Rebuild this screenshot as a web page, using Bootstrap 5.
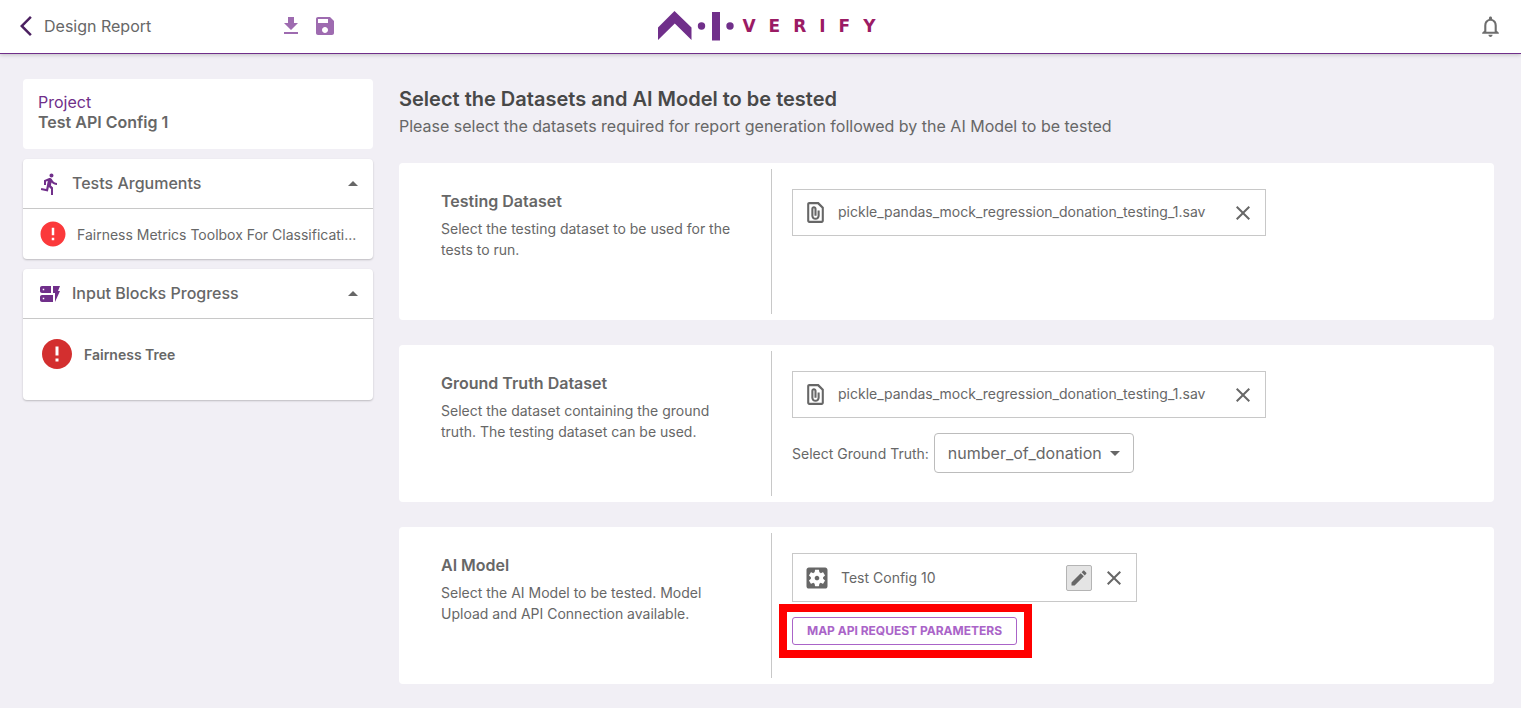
<!DOCTYPE html>
<html lang="en">
<head>
<meta charset="utf-8">
<meta name="viewport" content="width=device-width, initial-scale=1">
<title>AI Verify - Design Report</title>
<link href="https://cdn.jsdelivr.net/npm/bootstrap@5.3.0/dist/css/bootstrap.min.css" rel="stylesheet">
<style>
  :root { --brand: #702f8a; --ink: #676767; --line: #c8c8c8; }
  body { background: #f1eff5; color: var(--ink); font-family: Inter, sans-serif; font-size: 14px; line-height: 21px; }
  svg { display: block; fill: currentColor; flex: none; }
  h1, h2, h3, p { margin: 0; }

  .topbar { display: grid; grid-template-columns: 1fr auto 1fr; height: 54px; padding: 0 0 1px 14px; background: #fff; border-bottom: 1px solid var(--brand); box-shadow: 0 1px 4px rgba(0,0,0,.2); }
  .crumb { width: 235px; margin-left: 6px; font-size: 16px; }
  .tool { padding: 0; border: 0; background: none; color: inherit; }
  .back { color: #4b2060; }
  .tools { gap: 10px; color: #9e6bb0; }
  .brand-logo { margin-left: 12px; color: var(--brand); text-decoration: none; gap: 8px; }
  .wordmark { color: #9b1b64; font: bold 17px/24px "DejaVu Sans", sans-serif; letter-spacing: 13px; }
  .bell { margin-right: 18px; color: #6e6e6e; }

  .page { gap: 26px; padding: 25px 27px 24px 23px; }
  .side { width: 350px; gap: 10px; }
  .panel { background: #fff; border-radius: 4px; }
  .raised { box-shadow: 0 1px 2px rgba(0,0,0,.22); }
  .project { padding: 13px 15px 17px; font-size: 16px; line-height: 20px; }
  .project h2 { font-size: 16px; line-height: 20px; font-weight: 600; }
  .project p { color: var(--brand); }
  .panel-head { width: 100%; height: 50px; padding: 0 8px 0 15px; gap: 10px; border: 0; border-bottom: 1px solid var(--line); background: none; color: inherit; font-size: 16px; font-weight: 500; text-align: left; }
  .panel-head .lead-icon { color: var(--brand); }
  .test-row { height: 50px; padding: 0 15px; gap: 9px; }
  .error-soft { color: #fb393b; }
  .error-strong { color: #d32f2f; }
  .block-row { min-height: 81px; padding: 17px 16px 28px; gap: 9px; font-weight: 600; }

  .page-title { font-size: 20px; line-height: 28px; font-weight: 600; color: #484848; padding-top: 6px; }
  .page-sub { font-size: 16px; line-height: 24px; margin: 1px 0 25px; }
  .stack { gap: 25px; }
  .choice { min-height: 157px; padding: 6px 0; }
  .choice-text { width: 373px; padding: 20px 32px 0 42px; border-right: 1px solid var(--line); }
  .choice-text h3 { font-size: 16px; line-height: 24px; font-weight: 600; margin-bottom: 5px; }
  .choice-body { padding: 20px; }
  .file-box { max-width: 474px; height: 47px; padding: 0 10px; gap: 10px; border: 1px solid var(--line); }
  .file-name { padding-bottom: 3px; }
  .model-box { max-width: 345px; height: 49px; }
  .edit-btn { width: 26px; height: 26px; border: 1px solid #b4b4b4; border-radius: 2px; background: #e4e4e4; }
  .truth { margin-top: 15px; gap: 5px; }
  .truth-select { width: 200px; height: 40px; padding: 0 28px 0 13px; border: 1px solid #bcbcbc; border-radius: 4px; color: inherit; font-size: 16px; line-height: 24px;
    background: #fff url("data:image/svg+xml,%3Csvg xmlns='http://www.w3.org/2000/svg' viewBox='0 0 24 24'%3E%3Cpath fill='%23676767' d='M7 10l5 5 5-5z'/%3E%3C/svg%3E") no-repeat right 6px center / 24px; }
  .callout { width: 253px; margin: 2px 0 0 -13px; padding: 5px 7px 5px 5px; border: 8px solid #f00; }
  .map-btn { width: 100%; height: 28px; padding: 0; border: 1px solid #aa64c8; border-radius: 3px; background: #fff; color: #aa64c8; font-size: 12px; line-height: 18px; font-weight: 700; }
</style>
</head>
<body>
<svg class="d-none" aria-hidden="true">
  <symbol id="i-error" viewBox="0 0 24 24"><path d="M12 2C6.48 2 2 6.48 2 12s4.48 10 10 10 10-4.48 10-10S17.52 2 12 2zm1 15h-2v-2h2v2zm0-4h-2V7h2v6z"/></symbol>
  <symbol id="i-up" viewBox="0 0 24 24"><path d="M7 14l5-5 5 5z"/></symbol>
  <symbol id="i-close" viewBox="0 0 24 24"><path d="M19 6.41 17.59 5 12 10.59 6.41 5 5 6.41 10.59 12 5 17.59 6.41 19 12 13.41 17.59 19 19 17.59 13.41 12z"/></symbol>
  <symbol id="i-file" viewBox="0 0 24 24"><path d="M15 2H6c-1.1 0-2 .9-2 2v16c0 1.1.89 2 1.99 2H18c1.1 0 2-.9 2-2V7l-5-5zM6 20V4h8l4 4v12H6zm10-10v5c0 2.210-1.790 4-4 4s-4-1.790-4-4V8.500C8 7.120 9.120 6 10.500 6S13 7.120 13 8.500V15h-2V8.500c0-.28-.22-.5-.5-.5s-.5.22-.5.5V15c0 1.100.9 2 2 2s2-.9 2-2v-5h2z"/></symbol>
</svg>

<header class="topbar">
  <div class="d-flex align-items-center">
    <button class="tool back" type="button" aria-label="Back"><svg width="24" height="24" viewBox="0 0 24 24"><path d="M17.77 3.77 16 2 6 12l10 10 1.77-1.77L9.54 12z"/></svg></button>
    <span class="crumb">Design Report</span>
    <div class="tools d-flex">
      <button class="tool" type="button" aria-label="Download"><svg width="24" height="24" viewBox="0 0 24 24"><path d="M5 20h14v-2H5v2zM19 9h-4V3H9v6H5l7 7 7-7z"/></svg></button>
      <button class="tool" type="button" aria-label="Save"><svg width="24" height="24" viewBox="0 0 24 24"><path d="M17 3H5c-1.11 0-2 .9-2 2v14c0 1.1.89 2 2 2h14c1.1 0 2-.9 2-2V7l-4-4zm-5 16c-1.66 0-3-1.34-3-3s1.34-3 3-3 3 1.34 3 3-1.34 3-3 3zm3-10H5V5h10v4z"/></svg></button>
    </div>
  </div>
  <a class="brand-logo d-flex align-items-center" href="#" aria-label="AI Verify">
    <svg width="76" height="30" viewBox="0 0 76 30"><path d="M0 16.500 16.500 0 33.500 16.500V29L16.800 12.500 0 29z"/><circle cx="43.500" cy="15" r="3.700"/><path d="M54 1h8v28.500h-8z"/><circle cx="72" cy="15" r="3.700"/></svg>
    <span class="wordmark">VERIFY</span>
  </a>
  <div class="d-flex align-items-center justify-content-end">
    <button class="tool bell" type="button" aria-label="Notifications"><svg width="25" height="25" viewBox="0 0 24 24"><path d="M12 22c1.1 0 2-.9 2-2h-4c0 1.1.9 2 2 2zm6-6v-5c0-3.070-1.630-5.640-4.500-6.320V4c0-.83-.67-1.500-1.500-1.500s-1.500.67-1.500 1.500v.68C7.640 5.360 6 7.920 6 11v5l-2 2v1h16v-1l-2-2zm-2 1H8v-6c0-2.480 1.510-4.500 4-4.500s4 2.020 4 4.500v6z"/></svg></button>
  </div>
</header>

<div class="page d-flex align-items-start">
  <aside class="side d-flex flex-column flex-shrink-0">
    <section class="panel project">
      <p>Project</p>
      <h2>Test API Config 1</h2>
    </section>
    <section class="panel raised">
      <button class="panel-head d-flex align-items-center" type="button" aria-expanded="true">
        <svg class="lead-icon" width="24" height="24" viewBox="0 0 24 24"><path d="M13.490 5.480c1.100 0 2-.9 2-2s-.9-2-2-2-2 .9-2 2 .9 2 2 2zm-3.600 13.900l1-4.400 2.100 2v6h2v-7.500l-2.100-2 .6-3c1.300 1.500 3.300 2.500 5.500 2.500v-2c-1.900 0-3.500-1-4.300-2.400l-1-1.600c-.4-.6-1-1-1.700-1-.3 0-.5.1-.8.1l-5.200 2.200v4.700h2v-3.400l1.800-.7-1.600 8.100-4.900-1-.4 2 7 1.400z"/></svg>
        <span class="flex-grow-1">Tests Arguments</span>
        <svg width="24" height="24"><use href="#i-up"/></svg>
      </button>
      <div class="test-row d-flex align-items-center">
        <svg class="error-soft" width="30" height="30"><use href="#i-error"/></svg>
        <span class="text-nowrap">Fairness Metrics Toolbox For Classificati...</span>
      </div>
    </section>
    <section class="panel raised">
      <button class="panel-head d-flex align-items-center" type="button" aria-expanded="true">
        <svg class="lead-icon" width="24" height="24" viewBox="0 0 24 24"><path d="M17 20v-9h-2V4h7l-2 5h2l-5 11zm-2-7v7H4c-1.100 0-2-.9-2-2v-3c0-1.100.9-2 2-2h11zm-8.750 2.750h-1.500v1.500h1.500v-1.500zM13 4v7H4c-1.100 0-2-.9-2-2V6c0-1.100.9-2 2-2h9zM6.250 6.750h-1.500v1.500h1.500v-1.500z"/></svg>
        <span class="flex-grow-1">Input Blocks Progress</span>
        <svg width="24" height="24"><use href="#i-up"/></svg>
      </button>
      <div class="block-row d-flex align-items-center">
        <svg class="error-strong" width="36" height="36"><use href="#i-error"/></svg>
        <span>Fairness Tree</span>
      </div>
    </section>
  </aside>

  <main class="flex-grow-1">
    <h1 class="page-title">Select the Datasets and AI Model to be tested</h1>
    <p class="page-sub">Please select the datasets required for report generation followed by the AI Model to be tested</p>
    <div class="stack d-flex flex-column">
      <section class="panel choice d-flex">
        <div class="choice-text flex-shrink-0">
          <h3>Testing Dataset</h3>
          <p>Select the testing dataset to be used for the tests to run.</p>
        </div>
        <div class="choice-body flex-grow-1">
          <div class="file-box d-flex align-items-center">
            <svg width="25" height="25"><use href="#i-file"/></svg>
            <span class="file-name flex-grow-1">pickle_pandas_mock_regression_donation_testing_1.sav</span>
            <button class="tool" type="button" aria-label="Remove testing dataset"><svg width="24" height="24"><use href="#i-close"/></svg></button>
          </div>
        </div>
      </section>
      <section class="panel choice d-flex">
        <div class="choice-text flex-shrink-0">
          <h3>Ground Truth Dataset</h3>
          <p>Select the dataset containing the ground truth. The testing dataset can be used.</p>
        </div>
        <div class="choice-body flex-grow-1">
          <div class="file-box d-flex align-items-center">
            <svg width="25" height="25"><use href="#i-file"/></svg>
            <span class="file-name flex-grow-1">pickle_pandas_mock_regression_donation_testing_1.sav</span>
            <button class="tool" type="button" aria-label="Remove ground truth dataset"><svg width="24" height="24"><use href="#i-close"/></svg></button>
          </div>
          <div class="truth d-flex align-items-center">
            <label for="truth">Select Ground Truth:</label>
            <select class="truth-select form-select" id="truth"><option>number_of_donation</option></select>
          </div>
        </div>
      </section>
      <section class="panel choice d-flex">
        <div class="choice-text flex-shrink-0">
          <h3>AI Model</h3>
          <p>Select the AI Model to be tested. Model Upload and API Connection available.</p>
        </div>
        <div class="choice-body flex-grow-1 pb-0">
          <div class="file-box model-box d-flex align-items-center">
            <svg width="28" height="28" viewBox="0 0 24 24"><path d="M12 10c-1.100 0-2 .9-2 2s.9 2 2 2 2-.9 2-2-.9-2-2-2zm7-7H5c-1.110 0-2 .9-2 2v14c0 1.100.89 2 2 2h14c1.110 0 2-.9 2-2V5c0-1.100-.89-2-2-2zm-1.750 9c0 .23-.02.46-.05.68l1.480 1.160c.13.11.17.3.08.45l-1.400 2.420c-.09.15-.27.21-.43.15l-1.740-.7c-.36.28-.76.51-1.180.69l-.26 1.850c-.03.17-.18.3-.35.3h-2.800c-.17 0-.32-.13-.35-.29l-.26-1.850c-.43-.18-.82-.41-1.180-.69l-1.740.7c-.16.06-.34 0-.43-.15l-1.400-2.420c-.09-.15-.05-.34.08-.45l1.480-1.160c-.03-.23-.05-.46-.05-.69 0-.23.02-.46.05-.68l-1.480-1.160c-.13-.11-.17-.3-.08-.45l1.400-2.420c.09-.15.27-.21.43-.15l1.740.7c.36-.28.76-.51 1.180-.69l.26-1.850c.03-.17.18-.3.35-.3h2.800c.17 0 .32.13.35.29l.26 1.850c.43.18.82.41 1.180.69l1.740-.7c.16-.06.34 0 .43.15l1.400 2.420c.09.15.05.34-.08.45l-1.480 1.160c.03.23.05.46.05.69z"/></svg>
            <span class="flex-grow-1">Test Config 10</span>
            <button class="tool edit-btn d-flex align-items-center justify-content-center" type="button" aria-label="Edit model"><svg width="20" height="20" viewBox="0 0 24 24"><path d="M3 17.250V21h3.750L17.810 9.940l-3.750-3.750L3 17.250zM20.710 7.040c.39-.39.39-1.020 0-1.410l-2.340-2.340c-.39-.39-1.020-.39-1.410 0l-1.830 1.830 3.750 3.750 1.830-1.830z"/></svg></button>
            <button class="tool" type="button" aria-label="Remove model"><svg width="24" height="24"><use href="#i-close"/></svg></button>
          </div>
          <div class="callout"><button class="map-btn" type="button">MAP API REQUEST PARAMETERS</button></div>
        </div>
      </section>
    </div>
  </main>
</div>
<script src="https://cdn.jsdelivr.net/npm/bootstrap@5.3.0/dist/js/bootstrap.bundle.min.js"></script>
</body>
</html>
